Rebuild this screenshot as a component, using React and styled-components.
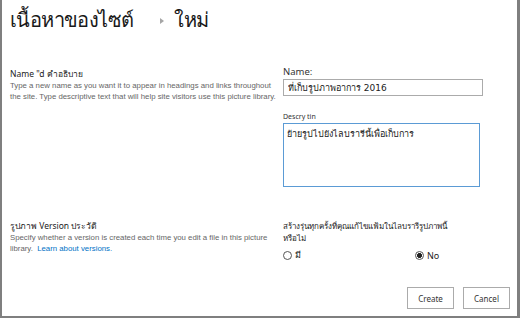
import React from "react";
import styled, { createGlobalStyle } from "styled-components";

const GlobalStyle = createGlobalStyle`
  html, body {
    margin: 0;
    padding: 0;
    background: #fff;
  }
  body {
    font-family: "Noto Sans", "Open Sans", sans-serif;
  }
`;

export default function App() {
  return (
    <>
      <GlobalStyle />
      <Frame>
        <Header>
          <Crumb>เนื้อหาของไซต์</Crumb>
          <Arrow />
          <Crumb>ใหม่</Crumb>
        </Header>

        <Section $height={152}>
          <Info>
            <Label>Name "d คำอธิบาย</Label>
            <Desc>
              Type a new name as you want it to appear in headings and links throughout
              the site. Type descriptive text that will help site visitors use this picture library.
            </Desc>
          </Info>
          <Fields>
            <FieldLabel>Name:</FieldLabel>
            <Input defaultValue="ที่เก็บรูปภาพอาการ 2016" />
            <SmallLabel>Descry tin</SmallLabel>
            <TextArea defaultValue="ย้ายรูปไปยังไลบรารีนี้เพื่อเก็บการ" />
          </Fields>
        </Section>

        <Section $height={70}>
          <Info>
            <Label>รูปภาพ Version ประวัติ</Label>
            <Desc>
              Specify whether a version is created each time you edit a file in this picture
              library.&nbsp; <Link href="#">Learn about versions.</Link>
            </Desc>
          </Info>
          <Fields>
            <Question>
              สร้างรุ่นทุกครั้งที่คุณแก้ไขแฟ้มในไลบรารีรูปภาพนี้
              <br />
              หรือไม่
            </Question>
            <Radios>
              <Choice>
                <Radio />
                มี
              </Choice>
              <Choice>
                <Radio $checked />
                No
              </Choice>
            </Radios>
          </Fields>
        </Section>

        <Footer>
          <Button>Create</Button>
          <Button>Cancel</Button>
        </Footer>
      </Frame>
    </>
  );
}

const Frame = styled("div")`
  box-sizing: border-box;
  width: 520px;
  height: 318px;
  border-left: 2px solid #7f7f7f;
  border-right: 3px solid #7f7f7f;
  border-bottom: 2px solid #7f7f7f;
  background: #fff;
  padding: 0 0 0 8px;
  display: flex;
  flex-direction: column;
`;

const Header = styled("div")`
  display: flex;
  align-items: center;
  height: 40px;
`;

const Crumb = styled("span")`
  font-family: "DejaVu Sans", "Noto Sans", sans-serif;
  font-size: 20px;
  letter-spacing: -0.6px;
  color: #1a1a1a;
  line-height: 32px;
`;

const Arrow = styled("span")`
  width: 0;
  height: 0;
  margin: 2px 10px 0 27px;
  border-top: 3px solid transparent;
  border-bottom: 3px solid transparent;
  border-left: 4px solid #a6a6a6;
`;

const Section = styled("div")`
  display: grid;
  grid-template-columns: 273px 1fr;
  height: ${(p) => p.$height}px;
  padding-top: 28px;
  box-sizing: border-box;
`;

const Info = styled("div")`
  display: flex;
  flex-direction: column;
`;

const Label = styled("div")`
  font-size: 8.5px;
  color: #222;
  line-height: 12px;
`;

const Desc = styled("div")`
  font-family: "Liberation Sans", sans-serif;
  font-size: 7.8px;
  color: #666;
  line-height: 11px;
  width: 270px;
`;

const Link = styled("a")`
  color: #0072c6;
  text-decoration: none;
`;

const Fields = styled("div")`
  display: flex;
  flex-direction: column;
`;

const FieldLabel = styled("div")`
  font-size: 9.5px;
  color: #333;
  line-height: 10px;
  margin-top: -1px;
`;

const Input = styled("input")`
  box-sizing: border-box;
  width: 200px;
  height: 17px;
  margin-top: 2px;
  border: 1px solid #ababab;
  padding: 0 4px;
  font-family: "DejaVu Sans", sans-serif;
  font-size: 9px;
  color: #222;
  outline: none;
`;

const SmallLabel = styled("div")`
  font-size: 7px;
  color: #333;
  margin-top: 16px;
  line-height: 9px;
`;

const TextArea = styled("textarea")`
  box-sizing: border-box;
  width: 197px;
  height: 64px;
  margin-top: 2px;
  border: 1px solid #5b9bd5;
  padding: 3px 3px;
  font-family: "DejaVu Sans", sans-serif;
  font-size: 9px;
  color: #222;
  resize: none;
  outline: none;
`;

const Question = styled("div")`
  font-size: 8px;
  color: #222;
  line-height: 12px;
`;

const Radios = styled("div")`
  display: grid;
  grid-template-columns: 132px 1fr;
  margin-top: 4px;
`;

const Choice = styled("label")`
  display: flex;
  align-items: center;
  gap: 3px;
  font-size: 9px;
  color: #222;
`;

const Radio = styled("span")`
  box-sizing: border-box;
  width: 9px;
  height: 9px;
  border-radius: 50%;
  border: 1px solid #555;
  background: ${(p) =>
    p.$checked ? "radial-gradient(circle, #222 0 2.2px, #fff 2.6px)" : "#fff"};
`;

const Footer = styled("div")`
  flex: 1;
  display: flex;
  justify-content: flex-end;
  align-items: flex-end;
  gap: 9px;
  padding: 0 7px 7px 0;
`;

const Button = styled("button")`
  box-sizing: border-box;
  min-width: 47px;
  height: 22px;
  padding: 0 8px;
  border: 1px solid #ababab;
  background: #fff;
  font-family: "Noto Sans", sans-serif;
  font-size: 8px;
  color: #333;
  cursor: pointer;
`;
